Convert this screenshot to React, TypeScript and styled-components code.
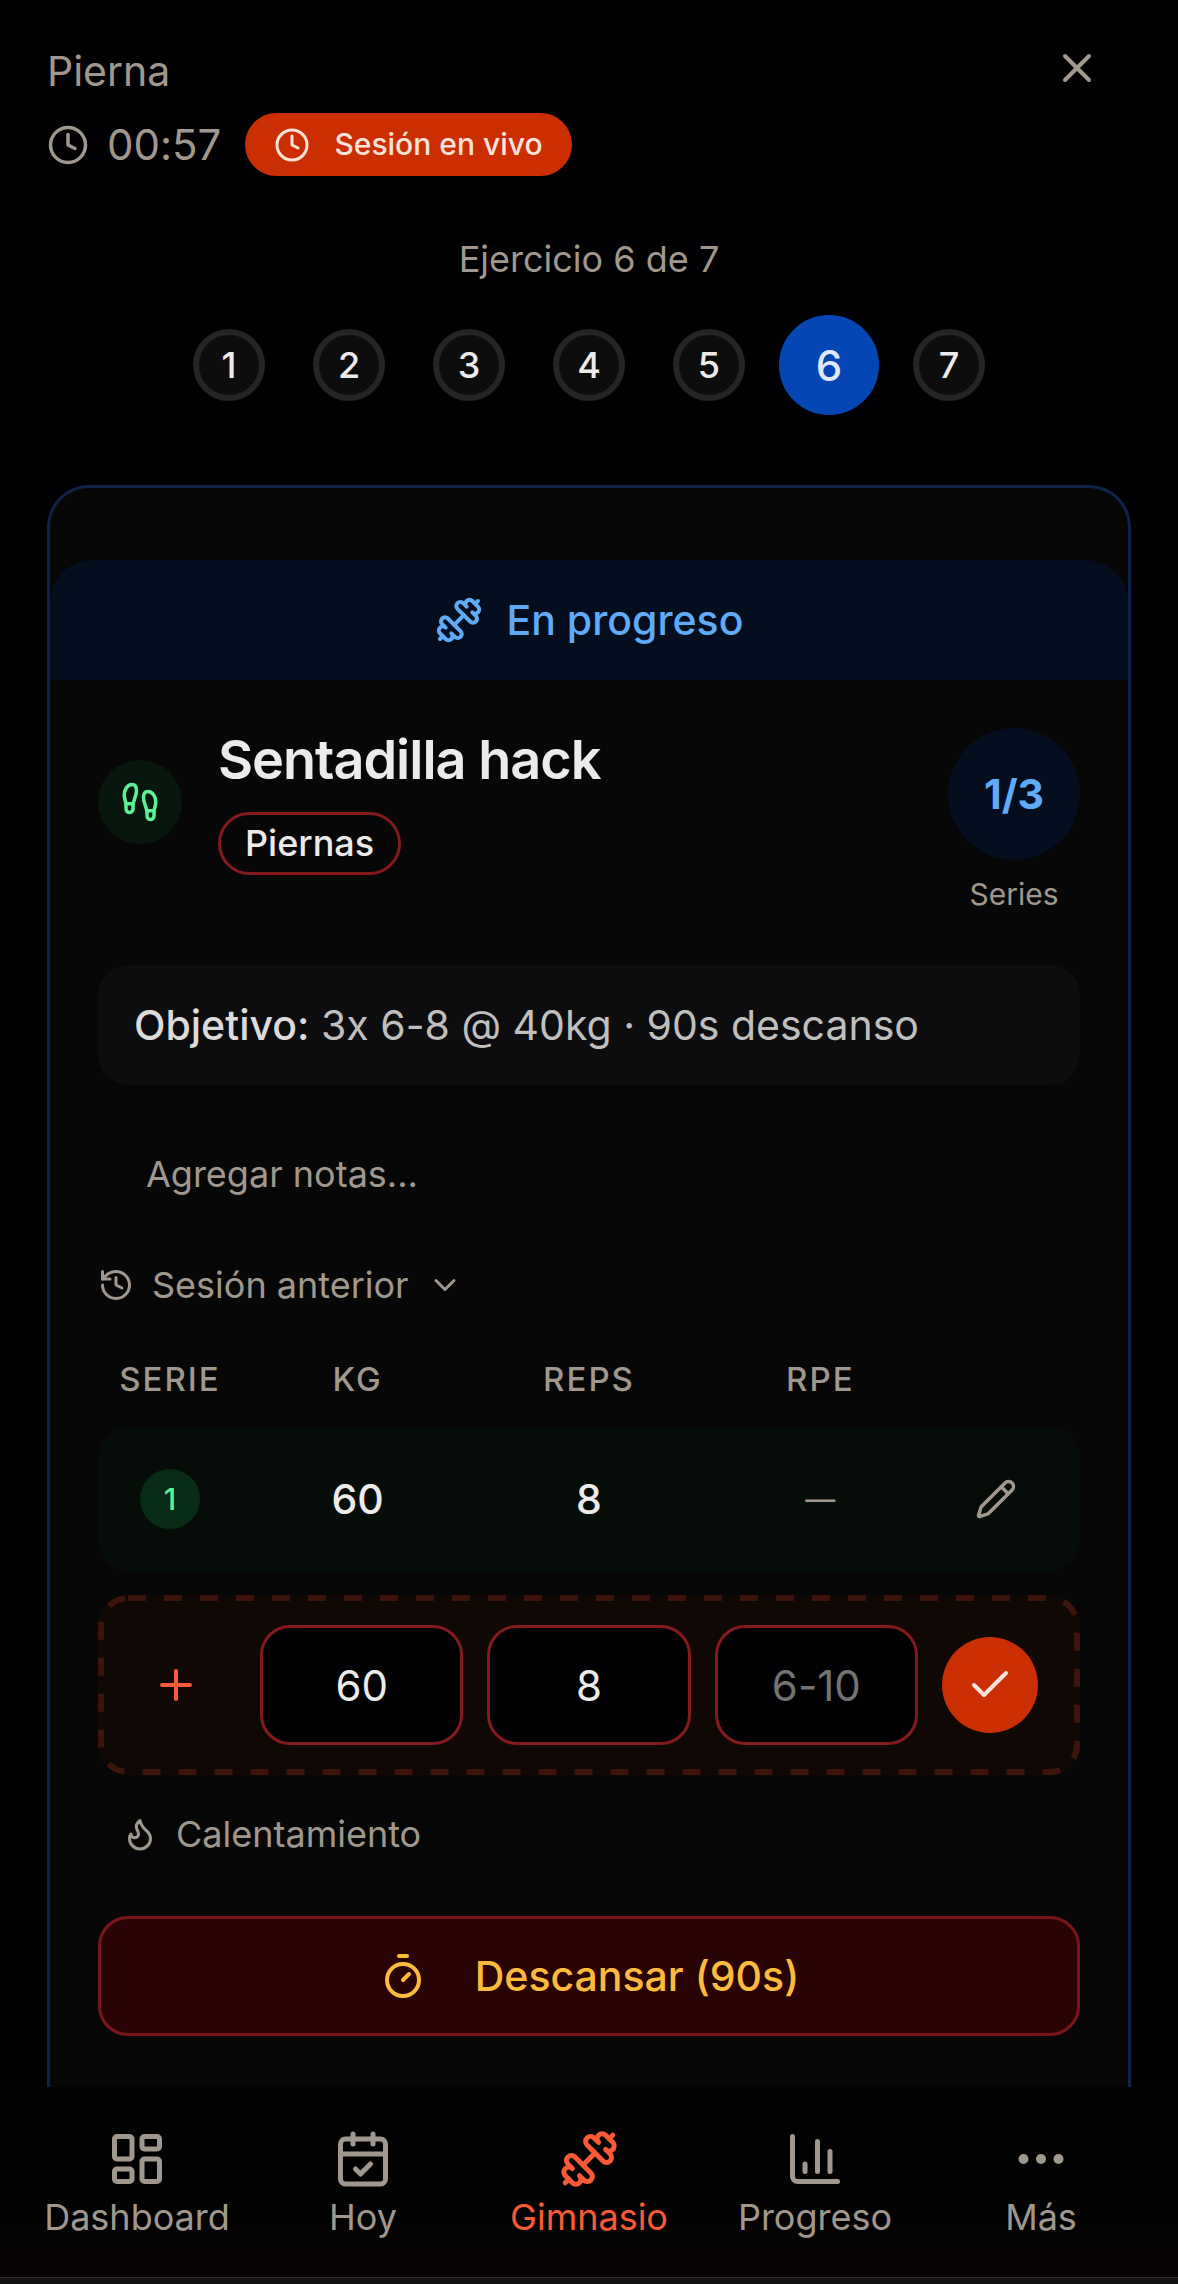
import React, { useState } from "react";
import styled, { createGlobalStyle, css } from "styled-components";
import {
  CalendarCheck,
  ChartColumn,
  Check,
  ChevronDown,
  Clock,
  Dumbbell,
  Ellipsis,
  Flame,
  Footprints,
  History,
  LayoutDashboard,
  Pencil,
  Plus,
  Timer,
  X,
} from "lucide-react";

const color = {
  page: "#010103",
  card: "#070707",
  muted: "#a0988e",
  text: "#ecebe9",
  accent: "#cb2e02",
  accentText: "#fbe3da",
  blue: "#60abf8",
  blueTint: "#050e1e",
  blueLine: "#10224a",
  redLine: "#831a1e",
  green: "#5bf295",
};

const GlobalStyle = createGlobalStyle`
  *, *::before, *::after { box-sizing: border-box; }
  body {
    margin: 0;
    background: ${color.page};
    color: ${color.text};
    font-family: Inter, "Liberation Sans", sans-serif;
    font-variant-ligatures: no-contextual;
  }
  button, input { font: inherit; color: inherit; }
  button { border: 0; padding: 0; background: none; cursor: pointer; }
  svg { flex: none; display: block; }
`;

const small = css`
  font-size: 36px;
  line-height: 48px;
`;
const medium = css`
  font-size: 41px;
  line-height: 60px;
`;
const center = css`
  display: flex;
  align-items: center;
  justify-content: center;
`;

const Page = styled.div`
  min-height: 100vh;
  display: flex;
  flex-direction: column;
`;

const Header = styled.header`
  display: flex;
  justify-content: space-between;
  align-items: flex-start;
  padding: 41px 47px 0;
`;

const HeaderInfo = styled.div`
  display: flex;
  flex-direction: column;
  gap: 12px;
`;

const WorkoutName = styled.h1`
  ${medium}
  margin: 0;
  font-weight: 400;
  color: ${color.muted};
`;

const StatusRow = styled.div`
  display: flex;
  align-items: center;
  gap: 24px;
`;

const Elapsed = styled.span`
  font-size: 42px;
  line-height: 60px;
  display: flex;
  align-items: center;
  gap: 18px;
  color: ${color.muted};
`;

const Pill = styled.span<{ $live?: boolean }>`
  display: inline-flex;
  align-items: center;
  gap: 24px;
  padding: 6px ${(p) => (p.$live ? 26 : 24)}px;
  border: 3px solid ${(p) => (p.$live ? color.accent : color.redLine)};
  border-radius: 32px;
  background: ${(p) => (p.$live ? color.accent : "transparent")};
  color: ${(p) => (p.$live ? color.accentText : color.text)};
  font-size: ${(p) => (p.$live ? 30 : 36)}px;
  line-height: 45px;
  font-weight: 500;
`;

const CloseButton = styled.button`
  ${center}
  width: 108px;
  height: 54px;
  color: ${color.muted};
`;

const Stepper = styled.nav`
  display: flex;
  flex-direction: column;
  align-items: center;
  gap: 32px;
  padding: 59px 47px 70px;
`;

const StepLabel = styled.p`
  ${small}
  margin: 0;
  color: ${color.muted};
`;

const Steps = styled.ol`
  display: grid;
  grid-template-columns: repeat(7, 120px);
  place-items: center;
  height: 100px;
  margin: 0;
  padding: 0;
  list-style: none;
`;

const Step = styled.button<{ $active: boolean }>`
  ${center}
  width: ${(p) => (p.$active ? 100 : 72)}px;
  height: ${(p) => (p.$active ? 100 : 72)}px;
  border: 6px solid ${(p) => (p.$active ? "#0346b4" : "#242423")};
  border-radius: 50%;
  background: ${(p) => (p.$active ? "#0346b4" : "#0d0d0e")};
  color: ${(p) => (p.$active ? "#dfe9fb" : color.text)};
  font-size: ${(p) => (p.$active ? 42 : 36)}px;
  font-weight: 500;
`;

const Card = styled.main`
  flex: 1;
  margin: 0 47px;
  padding-top: 72px;
  border: 3px solid ${color.blueLine};
  border-bottom: 0;
  border-radius: 42px 42px 0 0;
  background: ${color.card};
`;

const Banner = styled.div`
  ${medium}
  ${center}
  gap: 24px;
  padding: 30px;
  border-radius: 42px 42px 0 0;
  background: ${color.blueTint};
  color: ${color.blue};
  font-weight: 500;
`;

const CardBody = styled.div`
  display: flex;
  flex-direction: column;
  padding: 48px;
`;

const Exercise = styled.div`
  display: flex;
  align-items: flex-start;
  justify-content: space-between;
`;

const ExerciseInfo = styled.div`
  display: flex;
  align-items: center;
  gap: 36px;
`;

const MuscleIcon = styled.span`
  ${center}
  width: 84px;
  height: 84px;
  border-radius: 50%;
  background: #07170d;
  color: ${color.green};
`;

const ExerciseText = styled.div`
  display: flex;
  flex-direction: column;
  align-items: flex-start;
  gap: 20px;
`;

const ExerciseName = styled.h2`
  margin: 0;
  font-size: 54px;
  line-height: 64px;
  font-weight: 600;
  letter-spacing: -1px;
`;

const Progress = styled.div`
  display: flex;
  flex-direction: column;
  align-items: center;
  gap: 12px;
  font-size: 30px;
  line-height: 45px;
  color: ${color.muted};
`;

const ProgressCircle = styled.span`
  ${medium}
  ${center}
  width: 132px;
  height: 132px;
  border-radius: 50%;
  background: ${color.blueTint};
  color: ${color.blue};
  font-weight: 700;
`;

const Goal = styled.p`
  ${medium}
  margin: 48px 0 0;
  padding: 30px 36px;
  border-radius: 30px;
  background: #0d0d0f;
  color: #bfbfbe;

  strong {
    font-weight: 500;
    color: #dcdbda;
  }
`;

const GhostButton = styled.button<{ $inset: number }>`
  ${small}
  display: flex;
  align-items: center;
  align-self: flex-start;
  gap: 18px;
  height: 96px;
  padding: 0 ${(p) => p.$inset}px;
  color: ${color.muted};
`;

const Spaced = styled.div`
  display: flex;
  flex-direction: column;
  gap: 15px;
  padding: 41px 0 22px;
`;

const SetTable = styled.table`
  display: block;

  thead, tbody {
    display: flex;
    flex-direction: column;
    gap: 24px;
  }
  thead {
    padding-bottom: 24px;
  }
`;

const SetRow = styled.tr<{ $kind: "head" | "done" | "entry" }>`
  position: relative;
  display: grid;
  grid-template-columns: 120px repeat(3, 1fr) 120px;
  gap: 24px;
  align-items: center;
  padding: ${(p) => ({ head: "0 12px", done: "24px 12px", entry: "30px 18px" })[p.$kind]};
  border-radius: 30px;
  background: ${(p) => ({ head: "transparent", done: "#060c08", entry: "#0f0805" })[p.$kind]};
`;

const DashedOutline = styled.svg`
  position: absolute;
  inset: 0;
  width: 100%;
  height: 100%;
  pointer-events: none;

  rect {
    x: 3px;
    y: 3px;
    width: calc(100% - 6px);
    height: calc(100% - 6px);
    rx: 27px;
    fill: none;
    stroke: #3d140c;
    stroke-width: 6px;
    stroke-dasharray: 18px 18px;
  }
`;

const HeadCell = styled.th`
  padding: 0;
  font-size: 33px;
  line-height: 48px;
  font-weight: 500;
  letter-spacing: 2px;
  text-align: center;
  text-transform: uppercase;
  color: ${color.muted};
`;

const Cell = styled.td<{ $start?: boolean }>`
  ${medium}
  display: flex;
  align-items: center;
  justify-content: ${(p) => (p.$start ? "flex-start" : "center")};
  padding: 0;
  font-weight: 500;
`;

const EmptyValue = styled.span`
  font-size: 30px;
  font-weight: 400;
  color: ${color.muted};
`;

const SetBadge = styled.span`
  ${center}
  width: 60px;
  height: 60px;
  border-radius: 50%;
  background: #082b15;
  color: ${color.green};
  font-size: 30px;
  font-weight: 500;
`;

const AddMark = styled.span`
  color: #fa5a35;
`;

const SetInput = styled.input`
  width: 100%;
  min-width: 0;
  height: 120px;
  padding: 0 12px;
  border: 3px solid ${color.redLine};
  border-radius: 30px;
  outline: 0;
  background: ${color.page};
  font-size: 42px;
  font-weight: 400;
  text-align: center;

  &::placeholder {
    color: #737374;
    opacity: 1;
  }
`;

const RoundButton = styled.button<{ $primary?: boolean }>`
  ${center}
  width: 96px;
  height: 96px;
  border-radius: 50%;
  background: ${(p) => (p.$primary ? color.accent : "transparent")};
  color: ${(p) => (p.$primary ? color.accentText : color.muted)};
`;

const Warmup = styled.div`
  padding: 11px 0 34px;
`;

const RestButton = styled.button`
  ${medium}
  ${center}
  gap: 48px;
  height: 120px;
  border: 3px solid #7a161b;
  border-radius: 30px;
  background: #2a0404;
  color: #fdbb3e;
  font-weight: 500;
`;

const TabBar = styled.nav`
  display: grid;
  grid-template-columns: repeat(5, 1fr);
  padding: 42px 24px 36px;
  background: linear-gradient(#020202 60%, #080304);
`;

const Tab = styled.a<{ $active: boolean }>`
  ${small}
  display: flex;
  flex-direction: column;
  align-items: center;
  gap: 4px;
  color: ${(p) => (p.$active ? "#fa5a35" : color.muted)};
  text-decoration: none;
`;

const BottomEdge = styled.div`
  height: 7px;
  border-top: 1px solid #2e2d2f;
  background: #131214;
`;

const steps = [1, 2, 3, 4, 5, 6, 7];

const tabs = [
  { label: "Dashboard", Icon: LayoutDashboard },
  { label: "Hoy", Icon: CalendarCheck },
  { label: "Gimnasio", Icon: Dumbbell },
  { label: "Progreso", Icon: ChartColumn },
  { label: "Más", Icon: Ellipsis },
];

export default function App() {
  const [kg, setKg] = useState("60");
  const [reps, setReps] = useState("8");
  const [rpe, setRpe] = useState("");
  const [step, setStep] = useState(6);

  return (
    <Page>
      <GlobalStyle />
      <Header>
        <HeaderInfo>
          <WorkoutName>Pierna</WorkoutName>
          <StatusRow>
            <Elapsed>
              <Clock size={42} />
              00:57
            </Elapsed>
            <Pill $live>
              <Clock size={36} />
              Sesión en vivo
            </Pill>
          </StatusRow>
        </HeaderInfo>
        <CloseButton aria-label="Cerrar">
          <X size={48} />
        </CloseButton>
      </Header>

      <Stepper aria-label="Ejercicios">
        <StepLabel>Ejercicio {step} de 7</StepLabel>
        <Steps>
          {steps.map((n) => (
            <li key={n}>
              <Step $active={n === step} onClick={() => setStep(n)}>
                {n}
              </Step>
            </li>
          ))}
        </Steps>
      </Stepper>

      <Card>
        <Banner>
          <Dumbbell size={48} />
          En progreso
        </Banner>
        <CardBody>
          <Exercise>
            <ExerciseInfo>
              <MuscleIcon>
                <Footprints size={42} />
              </MuscleIcon>
              <ExerciseText>
                <ExerciseName>Sentadilla hack</ExerciseName>
                <Pill>Piernas</Pill>
              </ExerciseText>
            </ExerciseInfo>
            <Progress>
              <ProgressCircle>1/3</ProgressCircle>
              Series
            </Progress>
          </Exercise>

          <Goal>
            <strong>Objetivo:</strong> 3x 6-8 @ 40kg · 90s descanso
          </Goal>

          <Spaced>
            <GhostButton $inset={48}>Agregar notas...</GhostButton>
            <GhostButton $inset={0}>
              <History size={36} />
              Sesión anterior
              <ChevronDown size={36} />
            </GhostButton>
          </Spaced>

          <SetTable>
            <thead>
              <SetRow $kind="head">
                <HeadCell>Serie</HeadCell>
                <HeadCell id="col-kg">Kg</HeadCell>
                <HeadCell id="col-reps">Reps</HeadCell>
                <HeadCell id="col-rpe">RPE</HeadCell>
                <td />
              </SetRow>
            </thead>
            <tbody>
              <SetRow $kind="done">
                <Cell>
                  <SetBadge>1</SetBadge>
                </Cell>
                <Cell>60</Cell>
                <Cell>8</Cell>
                <Cell>
                  <EmptyValue>—</EmptyValue>
                </Cell>
                <Cell $start>
                  <RoundButton aria-label="Editar serie">
                    <Pencil size={42} />
                  </RoundButton>
                </Cell>
              </SetRow>
              <SetRow $kind="entry">
                <Cell>
                  <DashedOutline aria-hidden="true">
                    <rect />
                  </DashedOutline>
                  <AddMark>
                    <Plus size={48} />
                  </AddMark>
                </Cell>
                <Cell>
                  <SetInput
                    aria-labelledby="col-kg"
                    inputMode="decimal"
                    value={kg}
                    onChange={(e) => setKg(e.target.value)}
                  />
                </Cell>
                <Cell>
                  <SetInput
                    aria-labelledby="col-reps"
                    inputMode="numeric"
                    value={reps}
                    onChange={(e) => setReps(e.target.value)}
                  />
                </Cell>
                <Cell>
                  <SetInput
                    aria-labelledby="col-rpe"
                    inputMode="decimal"
                    placeholder="6-10"
                    value={rpe}
                    onChange={(e) => setRpe(e.target.value)}
                  />
                </Cell>
                <Cell $start>
                  <RoundButton $primary aria-label="Guardar serie">
                    <Check size={48} />
                  </RoundButton>
                </Cell>
              </SetRow>
            </tbody>
          </SetTable>

          <Warmup>
            <GhostButton $inset={24}>
              <Flame size={36} />
              Calentamiento
            </GhostButton>
          </Warmup>

          <RestButton>
            <Timer size={48} />
            Descansar (90s)
          </RestButton>
        </CardBody>
      </Card>

      <TabBar aria-label="Secciones">
        {tabs.map(({ label, Icon }) => (
          <Tab key={label} href="#" $active={label === "Gimnasio"}>
            <Icon size={60} />
            {label}
          </Tab>
        ))}
      </TabBar>
      <BottomEdge />
    </Page>
  );
}
